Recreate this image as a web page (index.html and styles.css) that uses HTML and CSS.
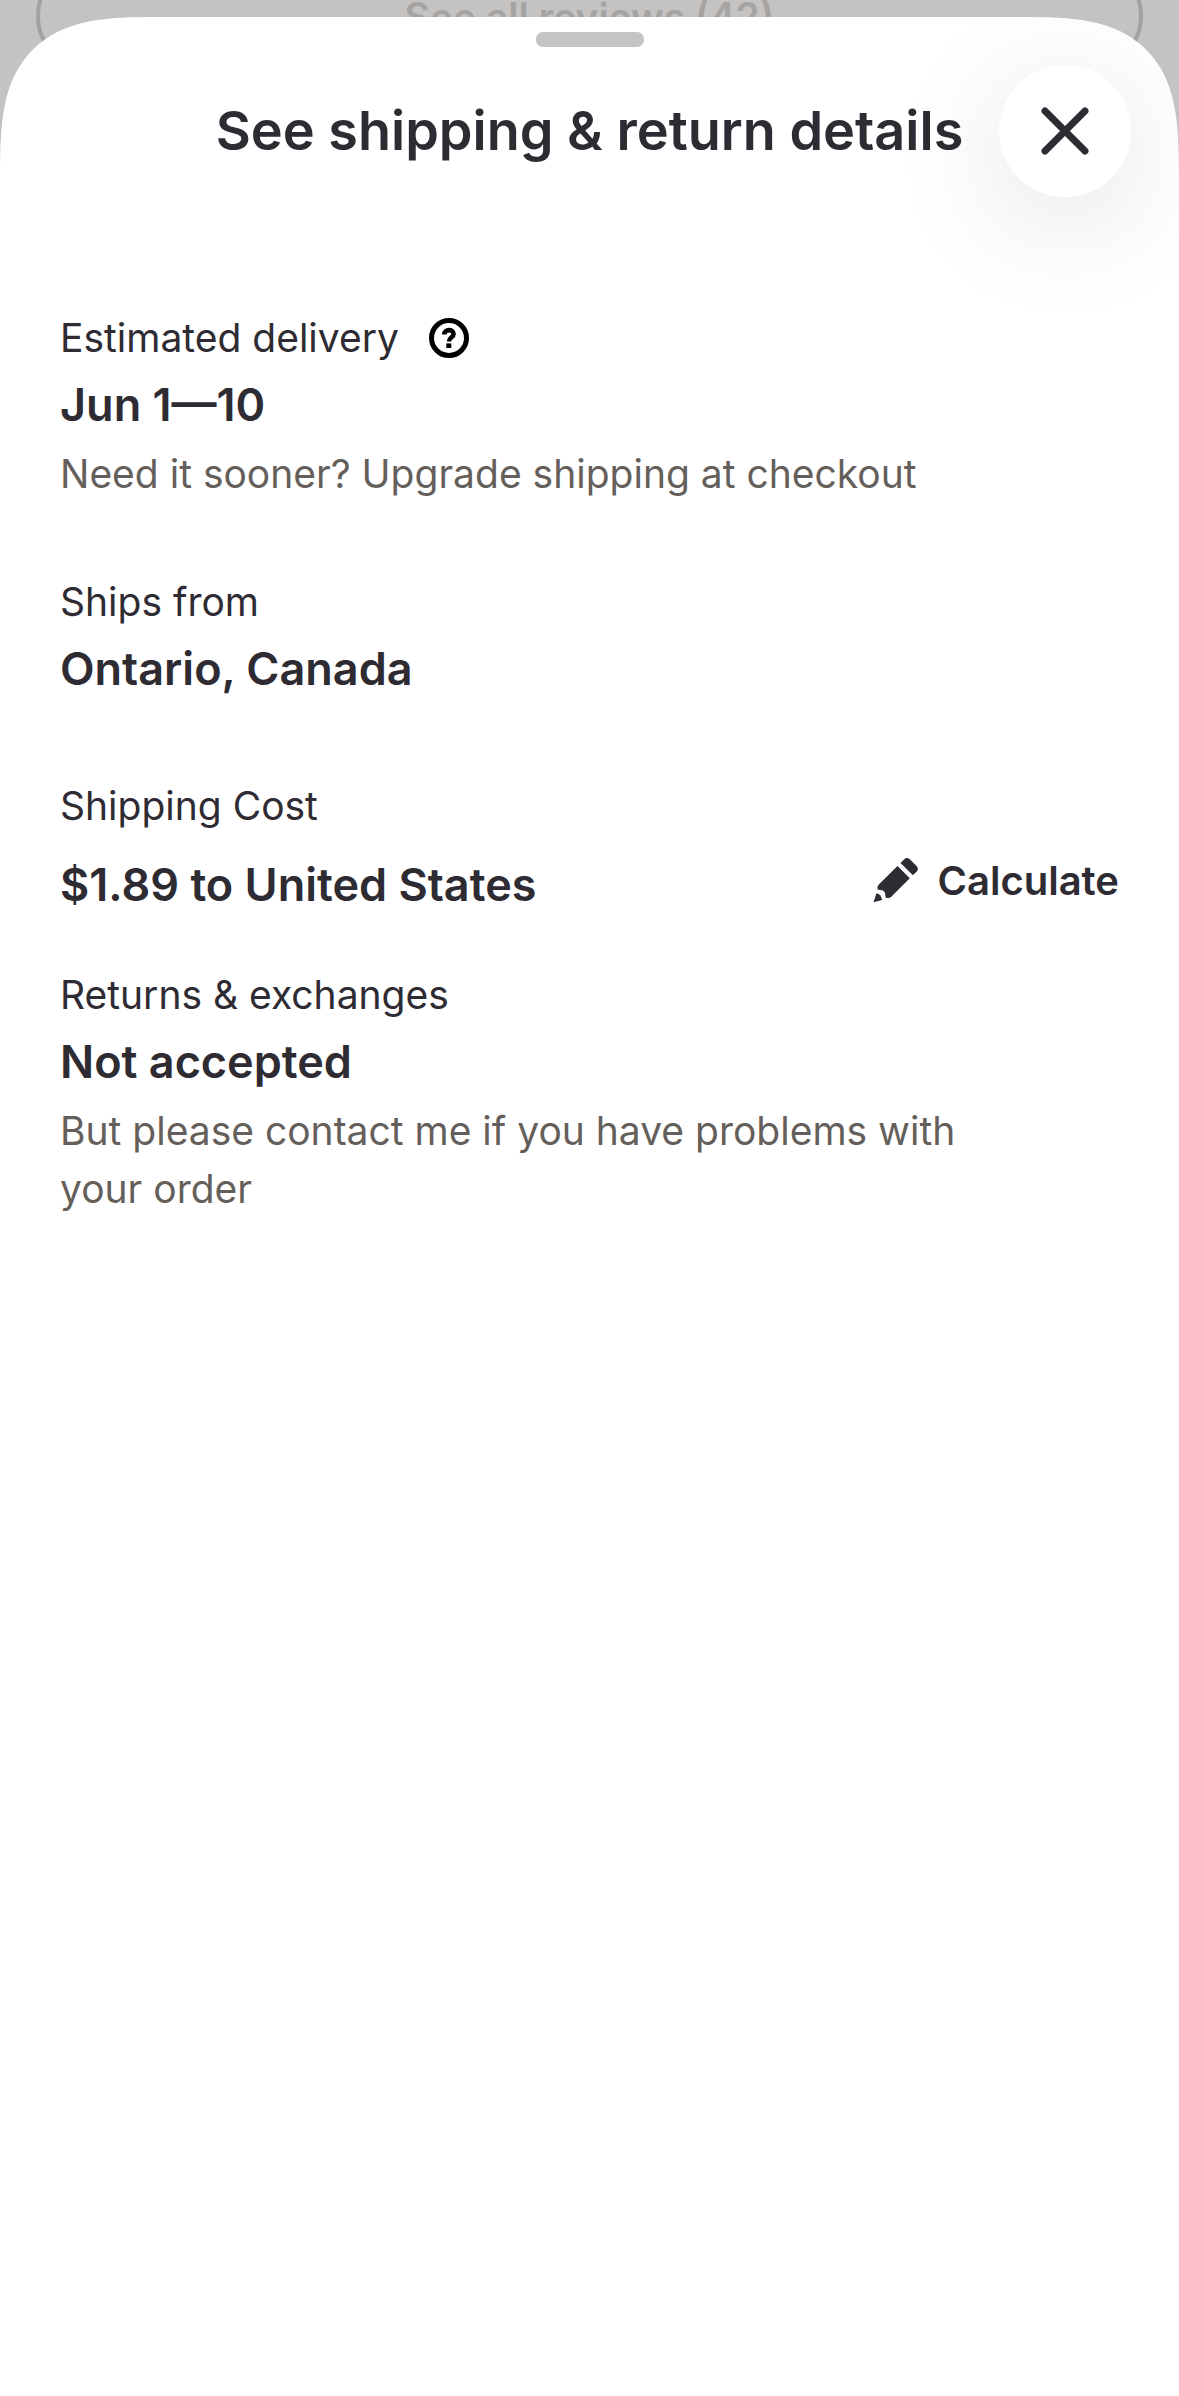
FILE: index.html
```html
<!DOCTYPE html>
<html lang="en">
<head>
  <meta charset="UTF-8">
  <meta name="viewport" content="width=device-width, initial-scale=1">
  <title>See shipping & return details</title>
  <link rel="stylesheet" href="styles.css">
</head>
<body>
  <!-- listing page, dimmed behind the sheet -->
  <div class="backdrop">
    <button class="reviews-button" type="button">See all reviews (42)</button>
  </div>

  <main class="sheet">
    <div class="handle"></div>
    <header class="sheet-header">
      <h1>See shipping &amp; return details</h1>
      <button class="close-button" type="button" aria-label="Close">
        <svg viewBox="0 0 48 48" width="48" height="48">
          <path d="M4 4L44 44M44 4L4 44" fill="none" stroke="currentColor" stroke-width="7" stroke-linecap="round"/>
        </svg>
      </button>
    </header>

    <section class="detail delivery">
      <div class="label-row">
        <h2>Estimated delivery</h2>
        <button class="help-button" type="button" aria-label="About estimated delivery">
          <svg viewBox="0 0 40 40" width="40" height="40">
            <circle cx="20" cy="20" r="17.5" fill="none" stroke="#000" stroke-width="5"/>
            <path d="M15.2 16.4C15.2 10.8 24.6 10.8 24.6 15.9C24.6 19.4 20 19.2 20 23.6" fill="none" stroke="#000" stroke-width="4.6"/>
            <rect x="17.3" y="25.4" width="5" height="4.6" fill="#000"/>
          </svg>
        </button>
      </div>
      <p class="value">Jun 1—10</p>
      <p class="note">Need it sooner? Upgrade shipping at checkout</p>
    </section>

    <section class="detail origin">
      <h2>Ships from</h2>
      <p class="value">Ontario, Canada</p>
    </section>

    <section class="detail cost">
      <h2>Shipping Cost</h2>
      <div class="cost-row">
        <p class="value">$1.89 to United States</p>
        <button class="calculate-button" type="button">
          <svg viewBox="0 0 46 46" width="46" height="46">
            <path d="M24.5 9L36.8 21.3L18 40Q16.500 41.300 14.500 41L12.800 40.800L11.800 35.200L10 33.400L4.600 32.600L4.400 30.800Q4.300 29 5.600 27.700Z" fill="currentColor"/>
            <path d="M27.500 6L31.500 2Q34 0 36.500 2L43.500 9Q46 11.500 44 14.200L39.900 18.300Z" fill="currentColor"/>
            <path d="M3.500 36.200Q8 37 9.200 43L0.500 45.200Z" fill="currentColor"/>
          </svg>
          Calculate
        </button>
      </div>
    </section>

    <section class="detail returns">
      <h2>Returns &amp; exchanges</h2>
      <p class="value">Not accepted</p>
      <p class="note">But please contact me if you have problems with your order</p>
    </section>
  </main>
</body>
</html>
```
FILE: styles.css
```css
* {
  box-sizing: border-box;
}
body {
  margin: 0;
  min-height: 100vh;
  display: flex;
  flex-direction: column;
  padding-top: 17px;
  background-color: #c5c3c1;
  color: #2e2b33;
  font-family: Inter, "Liberation Sans", sans-serif;
}
h1, h2, p {
  margin: 0;
}
button {
  border: none;
  padding: 0;
  background: none;
  color: inherit;
  font-family: inherit;
  cursor: pointer;
}
svg {
  display: block;
  flex: none;
}

/* Dimmed page */
.backdrop {
  position: absolute;
  top: 0;
  left: 0;
  right: 0;
  overflow: hidden;
  padding: 0 36px;
}
.reviews-button {
  width: 100%;
  height: 108px;
  margin-top: -38px;
  border: 4px solid #a3a1a0;
  border-radius: 54px;
  color: #a6a4a3;
  font-size: 39px;
  font-weight: 600;
}

/* Sheet */
.sheet {
  position: relative;
  flex: 1;
  padding: 15px 60px 60px;
  background-color: #fff;
  border-radius: 116px 116px 0 0;
  overflow: hidden;
}
/* smoother corners where the browser can draw them */
@supports (corner-shape: squircle) {
  .sheet {
    border-radius: 158px 158px 0 0;
    corner-shape: superellipse(1.58);
  }
}
.handle {
  width: 108px;
  height: 15px;
  margin: 0 auto;
  border-radius: 7px;
  background-color: #c4c4c6;
}
.sheet-header {
  display: grid;
  grid-template-columns: 1fr auto 1fr;
  align-items: center;
  margin: 18px -12px 0;
}
.sheet-header h1 {
  grid-column: 2;
  font-size: 54px;
  font-weight: 600;
  line-height: 72px;
}
.close-button {
  justify-self: end;
  display: flex;
  align-items: center;
  justify-content: center;
  width: 132px;
  height: 132px;
  border-radius: 50%;
  background-color: #fff;
  box-shadow: 0 24px 120px rgba(0, 0, 0, 0.12);
}

/* Detail sections */
.detail {
  display: flex;
  flex-direction: column;
  gap: 8px;
}
.delivery {
  margin-top: 114px;
}
.origin {
  margin-top: 72px;
}
.cost {
  margin-top: 78px;
}
.returns {
  margin-top: 39px;
}
.label-row {
  display: flex;
  align-items: center;
  gap: 30px;
}
h2 {
  font-size: 39px;
  font-weight: 400;
  line-height: 54px;
}
.value {
  font-size: 45px;
  font-weight: 600;
  line-height: 64px;
}
.note {
  max-width: 920px;
  color: #655f5c;
  font-size: 39px;
  line-height: 58px;
}
.cost-row {
  display: flex;
  justify-content: space-between;
  min-height: 88px;
}
.cost-row .value {
  align-self: center;
}
.calculate-button {
  display: flex;
  align-items: center;
  gap: 18px;
  height: 78px;
  font-size: 40px;
  font-weight: 600;
}
```
